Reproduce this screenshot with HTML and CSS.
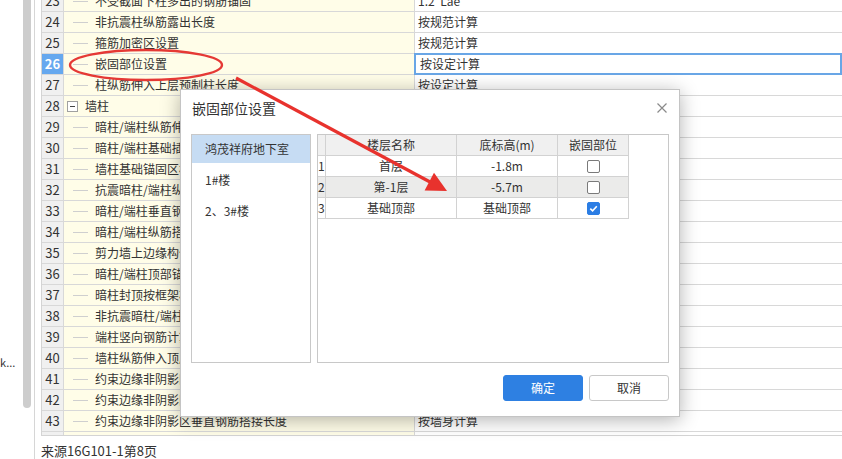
FILE: index.html
```html
<!DOCTYPE html>
<html lang="zh-CN">
<head>
<meta charset="utf-8">
<title>嵌固部位设置</title>
<link rel="stylesheet" href="styles.css">
</head>
<body>
<div class="app">
  <aside class="side">
    <div class="side-text">k...</div>
    <div class="scroll"></div>
  </aside>
  <div class="divider"></div>
  <main class="main">
    <div class="grid-wrap">
      <div class="grid">
        <div class="row"><div class="num">23</div><div class="name"><span class="branch"></span>不受截面下柱多出的钢筋锚固</div><div class="val">1.2*Lae</div></div>
        <div class="row"><div class="num">24</div><div class="name"><span class="branch"></span>非抗震柱纵筋露出长度</div><div class="val">按规范计算</div></div>
        <div class="row"><div class="num">25</div><div class="name"><span class="branch"></span>箍筋加密区设置</div><div class="val">按规范计算</div></div>
        <div class="row"><div class="num sel">26</div><div class="name"><span class="branch"></span>嵌固部位设置</div><div class="val sel">按设定计算</div></div>
        <div class="row"><div class="num">27</div><div class="name"><span class="branch last"></span>柱纵筋伸入上层预制柱长度</div><div class="val">按设定计算</div></div>
        <div class="row"><div class="num">28</div><div class="name group"><span class="tog"></span>墙柱</div><div class="val"></div></div>
        <div class="row"><div class="num">29</div><div class="name"><span class="branch"></span>暗柱/端柱纵筋伸入基础锚固长度</div><div class="val">按规范计算</div></div>
        <div class="row"><div class="num">30</div><div class="name"><span class="branch"></span>暗柱/端柱基础插筋弯折长度</div><div class="val">按规范计算</div></div>
        <div class="row"><div class="num">31</div><div class="name"><span class="branch"></span>墙柱基础锚固区横向钢筋</div><div class="val">按规范计算</div></div>
        <div class="row"><div class="num">32</div><div class="name"><span class="branch"></span>抗震暗柱/端柱纵筋露出长度</div><div class="val">按规范计算</div></div>
        <div class="row"><div class="num">33</div><div class="name"><span class="branch"></span>暗柱/端柱垂直钢筋搭接长度</div><div class="val">按墙柱保护层计算</div></div>
        <div class="row"><div class="num">34</div><div class="name"><span class="branch"></span>暗柱/端柱纵筋搭接接头错开百分率</div><div class="val">50%</div></div>
        <div class="row"><div class="num">35</div><div class="name"><span class="branch"></span>剪力墙上边缘构件纵筋伸入长度</div><div class="val">按规范计算</div></div>
        <div class="row"><div class="num">36</div><div class="name"><span class="branch"></span>暗柱/端柱顶部锚固计算起点</div><div class="val">从板底开始计算锚固</div></div>
        <div class="row"><div class="num">37</div><div class="name"><span class="branch"></span>暗柱封顶按框架柱计算</div><div class="val">否</div></div>
        <div class="row"><div class="num">38</div><div class="name"><span class="branch"></span>非抗震暗柱/端柱纵筋露出长度</div><div class="val">按规范计算</div></div>
        <div class="row"><div class="num">39</div><div class="name"><span class="branch"></span>端柱竖向钢筋计算方式</div><div class="val">按框架柱计算</div></div>
        <div class="row"><div class="num">40</div><div class="name"><span class="branch"></span>墙柱纵筋伸入顶层长度</div><div class="val">按规范计算</div></div>
        <div class="row"><div class="num">41</div><div class="name"><span class="branch"></span>约束边缘非阴影区拉筋设置</div><div class="val">按规范计算</div></div>
        <div class="row"><div class="num">42</div><div class="name"><span class="branch"></span>约束边缘非阴影区封闭箍筋</div><div class="val">按规范计算</div></div>
        <div class="row"><div class="num">43</div><div class="name"><span class="branch"></span>约束边缘非阴影区垂直钢筋搭接长度</div><div class="val">按墙身计算</div></div>
        <div class="row"><div class="num">44</div><div class="name"><span class="branch"></span>约束边缘非阴影区顶部锚固计算起点</div><div class="val">从板底开始计算锚固</div></div>
      </div>
    </div>
    <div class="status">来源16G101-1第8页</div>
  </main>
</div>

<div class="dialog">
  <div class="dlg-head">
    <div class="dlg-title">嵌固部位设置</div>
    <svg class="close" width="10" height="10" viewBox="0 0 10 10"><path d="M0.5 0.5 L9.5 9.5 M9.5 0.5 L0.5 9.5" stroke="#8a8a8a" stroke-width="1.2" fill="none"/></svg>
  </div>
  <div class="dlg-body">
    <div class="list">
      <div class="item sel">鸿茂祥府地下室</div>
      <div class="item">1#楼</div>
      <div class="item">2、3#楼</div>
    </div>
    <div class="panel">
      <div class="ftable">
        <div class="frow head"><div class="fc idx"></div><div class="fc">楼层名称</div><div class="fc">底标高(m)</div><div class="fc">嵌固部位</div></div>
        <div class="frow"><div class="fc idx">1</div><div class="fc">首层</div><div class="fc">-1.8m</div><div class="fc"><span class="cb"></span></div></div>
        <div class="frow alt"><div class="fc idx">2</div><div class="fc">第-1层</div><div class="fc">-5.7m</div><div class="fc"><span class="cb"></span></div></div>
        <div class="frow"><div class="fc idx">3</div><div class="fc">基础顶部</div><div class="fc">基础顶部</div><div class="fc"><span class="cb on"><svg width="11" height="11" viewBox="0 0 11 11"><path d="M2.3 5.6 L4.6 7.8 L8.8 3.2" stroke="#fff" stroke-width="1.6" fill="none"/></svg></span></div></div>
      </div>
    </div>
  </div>
  <div class="dlg-foot">
    <button class="btn primary">确定</button>
    <button class="btn default">取消</button>
  </div>
</div>

<svg class="annot" width="842" height="459" viewBox="0 0 842 459">
  <ellipse cx="146" cy="65" rx="76" ry="15" fill="none" stroke="#e53935" stroke-width="2.4"/>
  <line x1="236" y1="78" x2="431" y2="182.5" stroke="#e8322d" stroke-width="3.2"/>
  <polygon points="447,191 424.6,190.4 434,172.8" fill="#e8322d"/>
</svg>
</body>
</html>
```

FILE: styles.css
```css
* { box-sizing: border-box; }

body {
  margin: 0;
  width: 842px;
  height: 459px;
  overflow: hidden;
  position: relative;
  background: #fff;
  color: #333;
  font-family: "Noto Sans CJK SC", "Noto Sans", sans-serif;
}

.app {
  display: flex;
  height: 459px;
}

.side {
  width: 34px;
  flex-shrink: 0;
  display: flex;
}

.side-text {
  width: 23px;
  padding-top: 355px;
  font-size: 11px;
  line-height: 14px;
  white-space: nowrap;
  overflow: hidden;
  color: #333;
}

.scroll {
  width: 8px;
  height: 408px;
  background: #cdcdcd;
  border-radius: 0 0 4px 4px;
}

.divider {
  width: 1px;
  flex-shrink: 0;
  background: #d6d6d6;
}

.main {
  flex: 1;
  min-width: 0;
  margin-left: 6px;
  display: flex;
  flex-direction: column;
}

.grid-wrap {
  height: 443px;
  overflow: hidden;
  border-left: 1px solid #d4d4d4;
  border-bottom: 1px solid #d4d4d4;
}

.grid {
  margin-top: -9px;
}

.row {
  display: grid;
  grid-template-columns: 22px 351px 1fr;
  height: 21px;
  border-bottom: 1px solid #d8d8d8;
}

.num {
  background: #f0f0f0;
  border-right: 1px solid #d8d8d8;
  text-align: center;
  font-size: 13px;
  line-height: 20px;
  color: #333;
}

.num.sel {
  background: #66a8ef;
  color: #fff;
  font-weight: bold;
}

.name {
  background: #fffde8;
  border-right: 1px solid #d8d8d8;
  display: flex;
  align-items: center;
  padding-left: 9px;
  font-size: 12px;
  line-height: 20px;
  white-space: nowrap;
  overflow: hidden;
}

.branch {
  flex-shrink: 0;
  width: 15px;
  height: 1px;
  margin-right: 7px;
  background: #cfcfcf;
}

.name.group {
  padding-left: 3px;
}

.tog {
  flex-shrink: 0;
  width: 11px;
  height: 11px;
  margin-right: 7px;
  margin-top: 1px;
  border: 1px solid #a0a0a0;
  background: #fff;
  display: flex;
  align-items: center;
  justify-content: center;
}

.tog::after {
  content: "";
  width: 5px;
  height: 1px;
  background: #444;
}

.val {
  position: relative;
  padding-left: 3px;
  font-size: 12px;
  line-height: 20px;
  white-space: nowrap;
  overflow: visible;
  background: #fff;
}

.val.sel {
  padding-left: 5px;
}

.val.sel::after {
  content: "";
  position: absolute;
  left: -1px;
  top: -1px;
  right: 0;
  bottom: -1px;
  border: 2px solid #69a6e6;
}

.status {
  padding-top: 7px;
  font-size: 13px;
  line-height: 16px;
  white-space: nowrap;
}

/* dialog */
.dialog {
  position: absolute;
  left: 180px;
  top: 89px;
  width: 500px;
  height: 328px;
  background: #fff;
  border: 1px solid #c4c4c4;
  box-shadow: 0 3px 18px rgba(0, 0, 0, 0.3);
  display: flex;
  flex-direction: column;
}

.dlg-head {
  height: 44px;
  display: flex;
  justify-content: space-between;
  align-items: flex-start;
  padding: 8px 12px 0 11px;
}

.dlg-title {
  font-size: 14px;
  line-height: 20px;
  color: #333;
}

.close {
  margin-top: 5px;
}

.dlg-body {
  display: flex;
  gap: 6px;
  padding: 0 10px;
}

.list {
  width: 120px;
  height: 229px;
  border: 1px solid #c8c8c8;
}

.item {
  height: 28px;
  margin-bottom: 3px;
  padding-left: 13px;
  font-size: 12px;
  line-height: 28px;
  white-space: nowrap;
}

.item.sel {
  background: #c6dcf3;
}

.panel {
  width: 352px;
  height: 229px;
  border: 1px solid #c8c8c8;
}

.ftable {
  width: 311px;
}

.frow {
  display: grid;
  grid-template-columns: 8px 131px 101px 71px;
  height: 21px;
  border-bottom: 1px solid #d2d2d2;
}

.fc {
  border-right: 1px solid #d2d2d2;
  display: flex;
  align-items: center;
  justify-content: center;
  font-size: 12px;
  line-height: 20px;
  white-space: nowrap;
  overflow: hidden;
}

.fc.idx {
  justify-content: flex-start;
}

.frow.head .fc {
  background: #f0f0f0;
}

.frow.alt .fc {
  background: #ebebea;
}

.cb {
  display: inline-flex;
  align-items: center;
  justify-content: center;
  width: 13px;
  height: 13px;
  border: 1px solid #7a7a7a;
  border-radius: 2px;
  background: #fff;
}

.cb.on {
  background: #2b7de4;
  border-color: #2b7de4;
}

.dlg-foot {
  display: flex;
  justify-content: flex-end;
  gap: 6px;
  padding: 12px 10px 0;
}

.btn {
  width: 80px;
  height: 26px;
  padding: 0;
  border-radius: 3px;
  font-family: "Noto Sans CJK SC", "Noto Sans", sans-serif;
  font-size: 12px;
  line-height: 24px;
  text-align: center;
}

.btn.primary {
  background: #2e80e2;
  border: 1px solid #2e80e2;
  color: #fff;
}

.btn.default {
  background: #fff;
  border: 1px solid #c8c8c8;
  color: #333;
}

.annot {
  position: absolute;
  left: 0;
  top: 0;
  pointer-events: none;
}
```
